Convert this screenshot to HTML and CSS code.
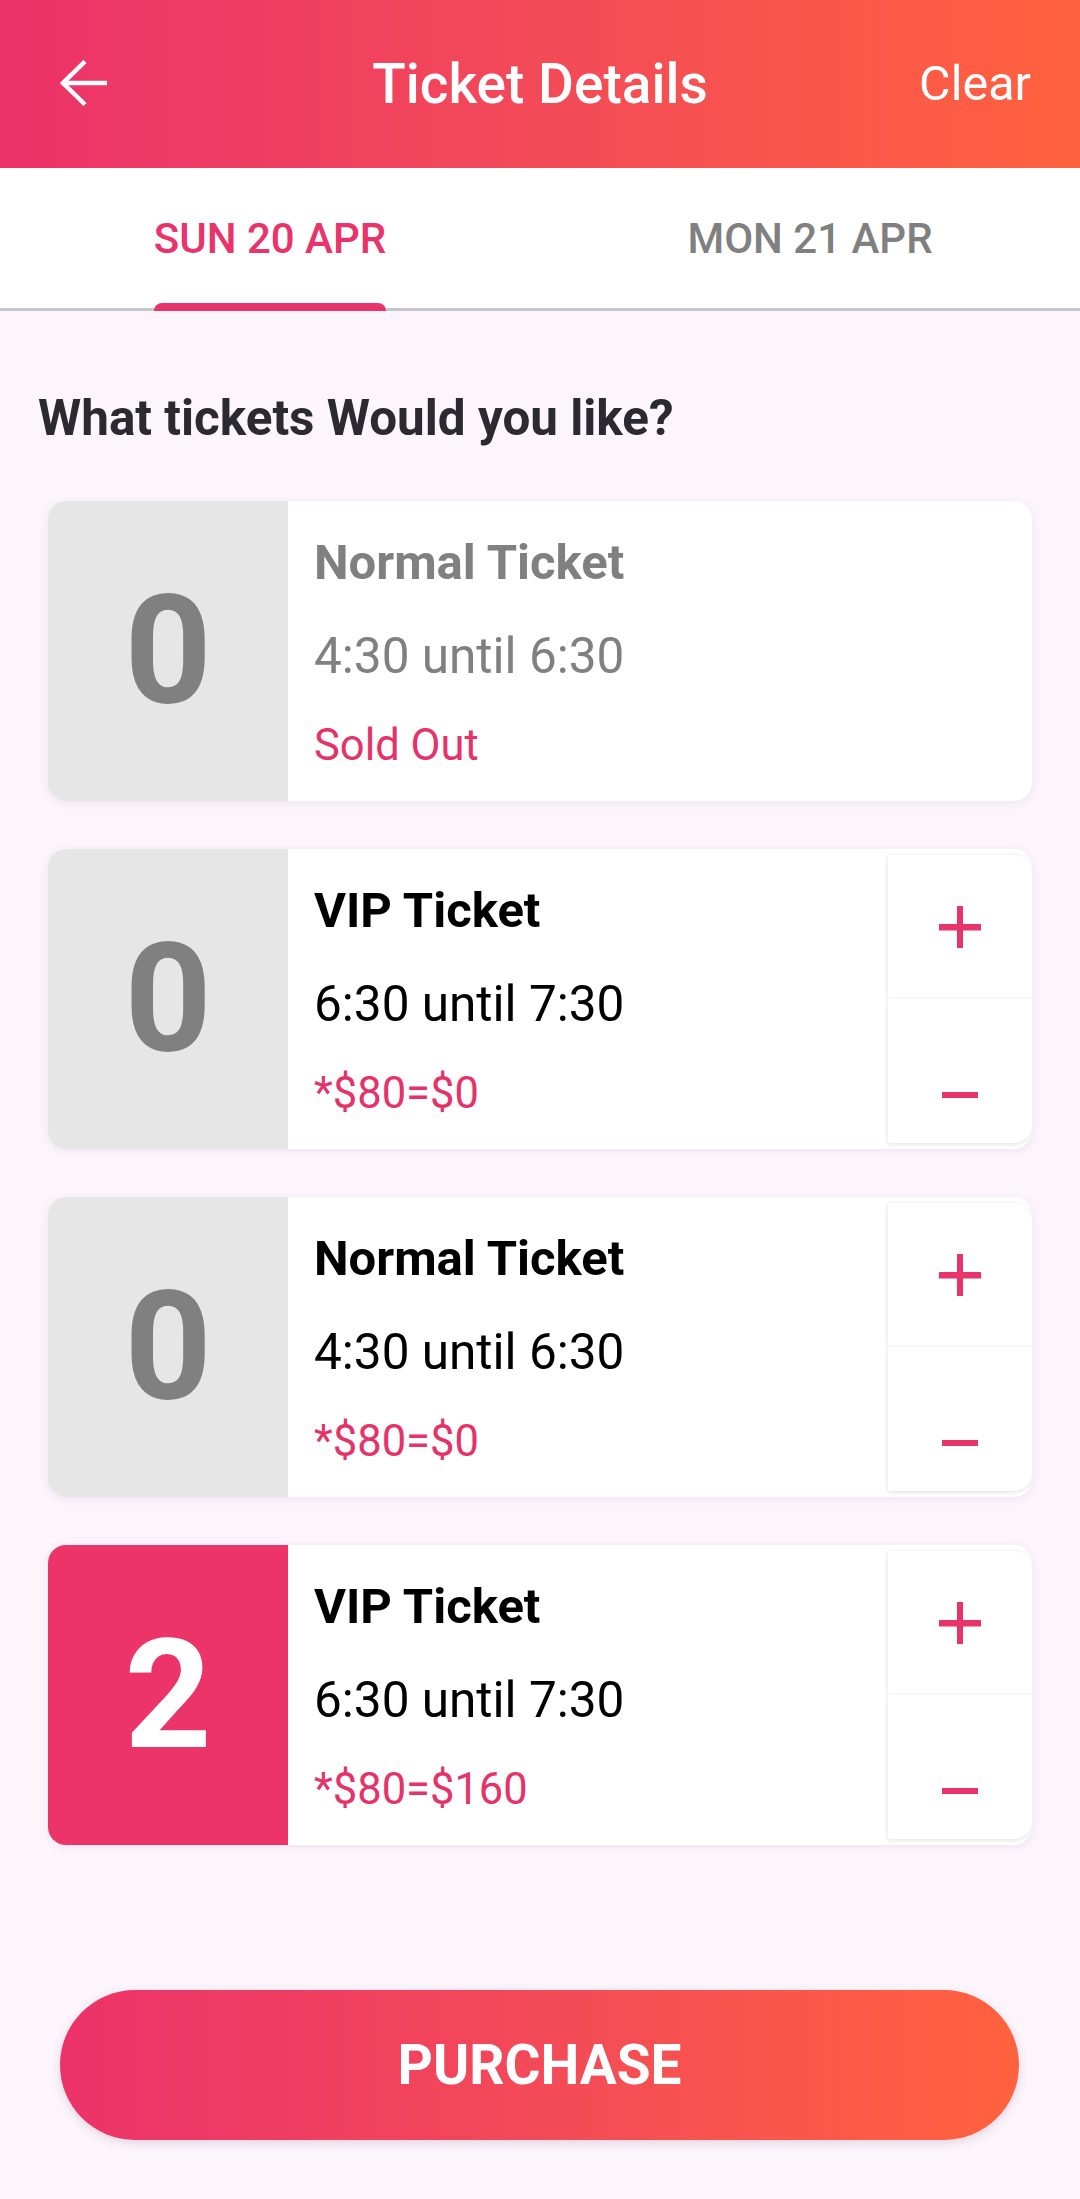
FILE: index.html
```html
<!DOCTYPE html>
<html lang="en">
<head>
<meta charset="utf-8">
<title>Ticket Details</title>
<link rel="stylesheet" href="styles.css">
</head>
<body>
<div class="app">
  <header class="topbar">
    <div class="topbar-left">
      <svg class="back" viewBox="0 0 48 48" width="48" height="48" aria-label="Back">
        <path d="M47 23H3.5M25 1.5L3 23L25 44.5" fill="none" stroke="#fff" stroke-width="4.5"/>
      </svg>
    </div>
    <h1 class="title">Ticket Details</h1>
    <div class="topbar-right"><span class="clear">Clear</span></div>
  </header>

  <nav class="tabs">
    <div class="tab active"><div class="tab-inner"><span class="tab-label">SUN 20 APR</span><span class="indicator"></span></div></div>
    <div class="tab"><div class="tab-inner"><span class="tab-label">MON 21 APR</span><span class="indicator"></span></div></div>
  </nav>

  <main class="content">
    <h2 class="question">What tickets Would you like?</h2>

    <div class="cards">
      <div class="card disabled">
        <div class="count">0</div>
        <div class="info">
          <div class="name">Normal Ticket</div>
          <div class="time">4:30 until 6:30</div>
          <div class="price">Sold Out</div>
        </div>
      </div>

      <div class="card">
        <div class="count">0</div>
        <div class="info">
          <div class="name">VIP Ticket</div>
          <div class="time">6:30 until 7:30</div>
          <div class="price">*$80=$0</div>
        </div>
        <div class="stepper">
          <div class="step plus"><svg viewBox="0 0 42 42" width="42" height="42"><rect x="0" y="18" width="42" height="6.5" fill="#E8336B"/><rect x="18" y="0" width="6" height="42" fill="#E8336B"/></svg></div>
          <div class="step minus"><svg viewBox="0 0 36 6" width="36" height="6"><rect x="0" y="0" width="36" height="6" fill="#E8336B"/></svg></div>
        </div>
      </div>

      <div class="card">
        <div class="count">0</div>
        <div class="info">
          <div class="name">Normal Ticket</div>
          <div class="time">4:30 until 6:30</div>
          <div class="price">*$80=$0</div>
        </div>
        <div class="stepper">
          <div class="step plus"><svg viewBox="0 0 42 42" width="42" height="42"><rect x="0" y="18" width="42" height="6.5" fill="#E8336B"/><rect x="18" y="0" width="6" height="42" fill="#E8336B"/></svg></div>
          <div class="step minus"><svg viewBox="0 0 36 6" width="36" height="6"><rect x="0" y="0" width="36" height="6" fill="#E8336B"/></svg></div>
        </div>
      </div>

      <div class="card">
        <div class="count selected">2</div>
        <div class="info">
          <div class="name">VIP Ticket</div>
          <div class="time">6:30 until 7:30</div>
          <div class="price">*$80=$160</div>
        </div>
        <div class="stepper">
          <div class="step plus"><svg viewBox="0 0 42 42" width="42" height="42"><rect x="0" y="18" width="42" height="6.5" fill="#E8336B"/><rect x="18" y="0" width="6" height="42" fill="#E8336B"/></svg></div>
          <div class="step minus"><svg viewBox="0 0 36 6" width="36" height="6"><rect x="0" y="0" width="36" height="6" fill="#E8336B"/></svg></div>
        </div>
      </div>
    </div>

    <button class="purchase">PURCHASE</button>
  </main>
</div>
</body>
</html>
```

FILE: styles.css
```css
* { box-sizing: border-box; }

html, body {
  margin: 0;
  padding: 0;
}

body {
  width: 1080px;
  height: 2199px;
  overflow: hidden;
  background: #FCF5FC;
  font-family: Roboto, "Noto Sans", "Liberation Sans", sans-serif;
}

.app {
  display: flex;
  flex-direction: column;
}

/* Top bar */
.topbar {
  height: 168px;
  display: grid;
  grid-template-columns: 1fr auto 1fr;
  align-items: center;
  background: linear-gradient(90deg, #EC326A 0%, #F34A58 50%, #FF623E 100%);
  color: #fff;
}

.topbar-left {
  display: flex;
  align-items: center;
  padding-left: 60px;
}

.back { display: block; }

.title {
  margin: 0;
  font-size: 55px;
  font-weight: 500;
  line-height: 64px;
  letter-spacing: 0;
}

.topbar-right {
  display: flex;
  justify-content: flex-end;
  padding-right: 49px;
}

.clear {
  font-size: 48.5px;
  font-weight: 400;
  line-height: 56px;
}

/* Tabs */
.tabs {
  height: 143px;
  display: grid;
  grid-template-columns: 1fr 1fr;
  background: #fff;
  box-shadow: inset 0 -3px 0 #C9C5CC;
}

.tab {
  display: flex;
  justify-content: center;
}

.tab-inner {
  display: flex;
  flex-direction: column;
  align-items: stretch;
  height: 100%;
}

.tab-label {
  flex: 1;
  display: flex;
  align-items: center;
  padding-top: 6px;
  font-size: 42px;
  font-weight: 500;
  color: #808080;
  white-space: nowrap;
}

.indicator {
  height: 8px;
  border-radius: 8px 8px 0 0;
  background: transparent;
}

.tab.active .tab-label { color: #E8336B; }
.tab.active .indicator { background: #E8336B; }

/* Content */
.content {
  display: flex;
  flex-direction: column;
}

.question {
  margin: 79px 0 0 38px;
  font-size: 49.4px;
  line-height: 56px;
  font-weight: 700;
  color: #2B2A30;
}

.cards {
  margin: 55px 48px 0 48px;
  display: flex;
  flex-direction: column;
  gap: 48px;
}

.card {
  height: 300px;
  display: flex;
  background: #fff;
  border-radius: 18px;
  overflow: hidden;
  box-shadow: 0 2px 8px rgba(120, 90, 120, 0.10);
}

.count {
  width: 240px;
  flex: none;
  display: flex;
  align-items: center;
  justify-content: center;
  background: #E6E6E6;
  color: #808080;
  font-size: 152px;
  font-weight: 700;
  line-height: 1;
}

.count.selected {
  background: #EC336A;
  color: #fff;
}

.info {
  flex: 1;
  display: flex;
  flex-direction: column;
  padding: 34px 0 0 26px;
}

.name {
  font-size: 49px;
  font-weight: 700;
  line-height: 56px;
  color: #000;
}

.time {
  margin-top: 37px;
  font-size: 49.5px;
  font-weight: 400;
  line-height: 56px;
  color: #000;
}

.price {
  margin-top: 38px;
  font-size: 43.5px;
  font-weight: 400;
  line-height: 48px;
  color: #E5336A;
}

.card.disabled .name,
.card.disabled .time {
  color: #808080;
}

.stepper {
  width: 144px;
  flex: none;
  display: flex;
  flex-direction: column;
  padding: 6px 0;
}

.step {
  flex: none;
  height: 144px;
  display: flex;
  align-items: center;
  justify-content: center;
  background: #fff;
  box-shadow: 0 1px 5px rgba(0, 0, 0, 0.13);
}

.step svg { display: block; }

.step.plus {
  border-radius: 0 18px 0 0;
}

.step.minus {
  border-radius: 0 0 18px 0;
  padding-top: 48px;
}

/* Purchase */
.purchase {
  margin: 145px 61px 0 60px;
  height: 150px;
  border: none;
  border-radius: 75px;
  background: linear-gradient(90deg, #EC326A 0%, #F34A58 50%, #FF623E 100%);
  color: #fff;
  font-family: Roboto, "Noto Sans", "Liberation Sans", sans-serif;
  font-size: 55px;
  font-weight: 700;
  box-shadow: 0 3px 10px rgba(120, 60, 100, 0.18);
}
```
